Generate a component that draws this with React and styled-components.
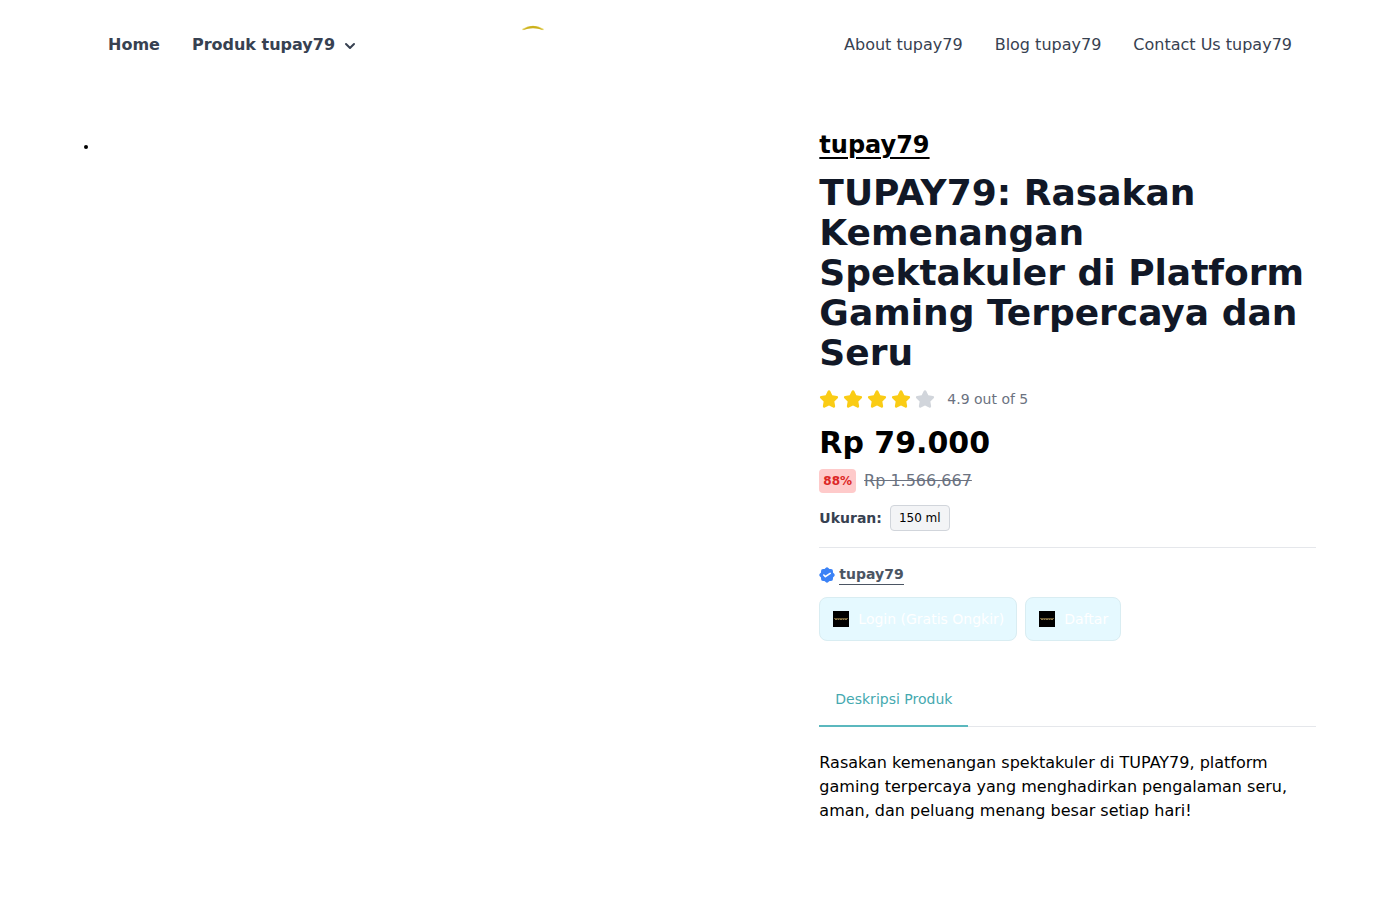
import React from 'react';
import styled, { createGlobalStyle } from 'styled-components';

const GlobalStyle = createGlobalStyle`
  *, *::before, *::after {
    box-sizing: border-box;
  }
  body {
    margin: 0;
    background: #fff;
    color: #000;
    font-family: 'DejaVu Sans', sans-serif;
    font-size: 16px;
    line-height: 24px;
  }
  h1, p, ul {
    margin: 0;
    padding: 0;
  }
`;

const Container = styled.div`
  max-width: 1280px;
  margin: 0 auto;
  padding: 0 24px;
`;

const Nav = styled.nav`
  display: flex;
  align-items: flex-start;
  justify-content: space-between;
  padding: 25px 24px 0;
`;

const NavGroup = styled.div`
  display: flex;
  align-items: center;
  gap: 32px;
  padding-top: 8px;
`;

const NavLink = styled.a`
  color: #374151;
  font-weight: ${prop => (prop.$bold ? 700 : 400)};
  text-decoration: none;
`;

const NavButton = styled.button`
  display: flex;
  align-items: center;
  gap: 5px;
  padding: 0;
  border: 0;
  background: none;
  color: #374151;
  font: inherit;
  font-weight: 700;
  cursor: pointer;

  svg {
    margin-top: 2px;
  }
`;

const LogoLink = styled.a`
  display: block;

  svg {
    display: block;
  }
`;

const Product = styled.main`
  display: grid;
  grid-template-columns: 7fr 5fr;
  gap: 40px;
  padding: 64px 0;
`;

const Gallery = styled.ul`
  padding-top: 8px;
  font-size: 14px;
  line-height: 18px;
  list-style: disc inside;
`;

const Details = styled.section`
  min-width: 0;
`;

const Brand = styled.a`
  display: block;
  width: fit-content;
  color: #000;
  font-size: 24px;
  font-weight: 700;
  line-height: 32px;
  text-decoration: underline;
  text-underline-offset: 4px;
`;

const Title = styled.h1`
  margin-top: 12px;
  color: #111827;
  font-size: 36px;
  font-weight: 700;
  line-height: 40px;
`;

const Rating = styled.div`
  display: flex;
  align-items: center;
  gap: 4px;
  margin-top: 16px;
  color: #6b7280;
  font-size: 14px;
  line-height: 20px;

  span {
    margin-left: 8px;
  }
`;

const StarIcon = styled.svg`
  width: 20px;
  height: 20px;
  fill: ${prop => (prop.$filled ? '#facc15' : '#d1d5db')};
`;

const Price = styled.p`
  margin-top: 16px;
  font-size: 30px;
  font-weight: 700;
  line-height: 36px;
`;

const Row = styled.div`
  display: flex;
  align-items: center;
  gap: 8px;
  margin-top: ${prop => prop.$top};
`;

const Discount = styled.span`
  padding: 0 4px;
  border-radius: 4px;
  background: #fecaca;
  color: #dc2626;
  font-size: 12px;
  font-weight: 700;
`;

const OldPrice = styled.s`
  color: #6b7280;
`;

const SizeLabel = styled.span`
  color: #374151;
  font-size: 14px;
  font-weight: 700;
`;

const SizeButton = styled.button`
  padding: 4px 8px;
  border: 1px solid #d1d5db;
  border-radius: 4px;
  background: #f3f4f6;
  color: #000;
  font: inherit;
  font-size: 12px;
  line-height: 16px;
  cursor: pointer;
`;

const Divider = styled.hr`
  margin: 16px 0;
  border: 0;
  border-top: 1px solid #e5e7eb;
`;

const Seller = styled.div`
  display: flex;
  align-items: center;
  gap: 4px;
  min-height: 21px;
  font-size: 14px;

  svg {
    color: #3b82f6;
  }
`;

const SellerLink = styled.a`
  border-bottom: 1px solid #4b5563;
  color: #4b5563;
  font-weight: 700;
  line-height: 20px;
  text-decoration: none;
`;

const ActionLink = styled.a`
  display: inline-flex;
  align-items: center;
  gap: 9px;
  padding: 11px 12px 11px 13px;
  border: 1px solid #d9edf2;
  border-radius: 8px;
  background: #e5f9ff;
  color: #fff;
  font-size: 14px;
  line-height: 20px;
  text-decoration: none;
`;

const Tabs = styled.div`
  display: flex;
  margin-top: 32px;
  border-bottom: 1px solid #e5e7eb;
`;

const Tab = styled.button`
  margin-bottom: -1px;
  padding: 16px;
  border: 0;
  border-bottom: 2px solid #5bb8be;
  background: none;
  color: #45a9af;
  font: inherit;
  font-size: 14px;
  line-height: 20px;
  cursor: pointer;
`;

const Description = styled.p`
  margin-top: 24px;
`;

function Logo() {
  return (
    <svg width="160" height="40" viewBox="0 0 160 40" aria-hidden="true">
      <path d="M0.5 4.6Q11-1.4 21.5 4.6" fill="none" stroke="#e6d56a" strokeWidth="1.6" />
      <path d="M1 5Q11-3 21 5Q11 1.6 1 5Z" fill="#cbb01c" />
    </svg>
  );
}

function Chevron() {
  return (
    <svg width="20" height="20" viewBox="0 0 20 20" fill="currentColor" aria-hidden="true">
      <path
        fillRule="evenodd"
        d="M5.293 7.293a1 1 0 011.414 0L10 10.586l3.293-3.293a1 1 0 111.414 1.414l-4 4a1 1 0 01-1.414 0l-4-4a1 1 0 010-1.414z"
      />
    </svg>
  );
}

function Star({ filled }) {
  return (
    <StarIcon $filled={filled} viewBox="0 0 22 20" aria-hidden="true">
      <path d="M20.924 7.625a1.523 1.523 0 0 0-1.238-1.044l-5.051-.734-2.259-4.577a1.534 1.534 0 0 0-2.752 0L7.365 5.847l-5.051.734A1.535 1.535 0 0 0 1.463 9.2l3.656 3.563-.863 5.031a1.532 1.532 0 0 0 2.226 1.616L11 17.033l4.518 2.375a1.534 1.534 0 0 0 2.226-1.617l-.863-5.03L20.537 9.2a1.523 1.523 0 0 0 .387-1.575Z" />
    </StarIcon>
  );
}

function Verified() {
  return (
    <svg width="16" height="16" viewBox="0 0 20 20" aria-hidden="true">
      <path
        fill="currentColor"
        d="m18.774 8.245-.892-.893a1.5 1.5 0 0 1-.437-1.052V5.036a2.484 2.484 0 0 0-2.48-2.48H13.7a1.5 1.5 0 0 1-1.052-.438l-.893-.892a2.484 2.484 0 0 0-3.51 0l-.893.892a1.5 1.5 0 0 1-1.052.437H5.036a2.484 2.484 0 0 0-2.48 2.481V6.3a1.5 1.5 0 0 1-.438 1.052l-.892.893a2.484 2.484 0 0 0 0 3.51l.892.893a1.5 1.5 0 0 1 .437 1.052v1.264a2.484 2.484 0 0 0 2.481 2.481H6.3a1.5 1.5 0 0 1 1.052.437l.893.892a2.484 2.484 0 0 0 3.51 0l.893-.892a1.5 1.5 0 0 1 1.052-.437h1.264a2.484 2.484 0 0 0 2.481-2.48V13.7a1.5 1.5 0 0 1 .437-1.052l.892-.893a2.484 2.484 0 0 0 0-3.51Z"
      />
      <path
        fill="#fff"
        d="M8 13a1 1 0 0 1-.707-.293l-2-2a1 1 0 1 1 1.414-1.414l1.42 1.42 5.318-3.545a1 1 0 0 1 1.11 1.664l-6 4A1 1 0 0 1 8 13Z"
      />
    </svg>
  );
}

function Thumb() {
  return (
    <svg width="16" height="16" viewBox="0 0 16 16" aria-hidden="true">
      <rect width="16" height="16" fill="#000" />
      <path d="M1 7.5h14" stroke="#6b5a34" strokeWidth="1" />
      <path d="M2 8.5h12" stroke="#8f7b4c" strokeWidth="1" strokeDasharray="2 0.5" />
    </svg>
  );
}

function App() {
  return (
    <>
      <GlobalStyle />
      <Container>
        <Nav>
          <NavGroup>
            <NavLink href="#home" $bold>Home</NavLink>
            <NavButton type="button">
              Produk tupay79
              <Chevron />
            </NavButton>
          </NavGroup>
          <LogoLink href="#home" aria-label="tupay79">
            <Logo />
          </LogoLink>
          <NavGroup>
            <NavLink href="#about">About tupay79</NavLink>
            <NavLink href="#blog">Blog tupay79</NavLink>
            <NavLink href="#contact">Contact Us tupay79</NavLink>
          </NavGroup>
        </Nav>
        <Product>
          <Gallery>
            <li />
          </Gallery>
          <Details>
            <Brand href="#brand">tupay79</Brand>
            <Title>
              TUPAY79: Rasakan Kemenangan Spektakuler di Platform Gaming Terpercaya dan Seru
            </Title>
            <Rating>
              {[1, 2, 3, 4, 5].map(n => (
                <Star key={n} filled={n < 5} />
              ))}
              <span>4.9 out of 5</span>
            </Rating>
            <Price>Rp 79.000</Price>
            <Row $top="8px">
              <Discount>88%</Discount>
              <OldPrice>Rp 1.566,667</OldPrice>
            </Row>
            <Row $top="12px">
              <SizeLabel>Ukuran:</SizeLabel>
              <SizeButton type="button">150 ml</SizeButton>
            </Row>
            <Divider />
            <Seller>
              <Verified />
              <SellerLink href="#seller">tupay79</SellerLink>
            </Seller>
            <Row $top="12px">
              <ActionLink href="#login">
                <Thumb />
                Login (Gratis Ongkir)
              </ActionLink>
              <ActionLink href="#daftar">
                <Thumb />
                Daftar
              </ActionLink>
            </Row>
            <Tabs role="tablist">
              <Tab type="button" role="tab" aria-selected="true">Deskripsi Produk</Tab>
            </Tabs>
            <Description>
              Rasakan kemenangan spektakuler di TUPAY79, platform gaming terpercaya yang
              menghadirkan pengalaman seru, aman, dan peluang menang besar setiap hari!
            </Description>
          </Details>
        </Product>
      </Container>
    </>
  );
}

export default App;
